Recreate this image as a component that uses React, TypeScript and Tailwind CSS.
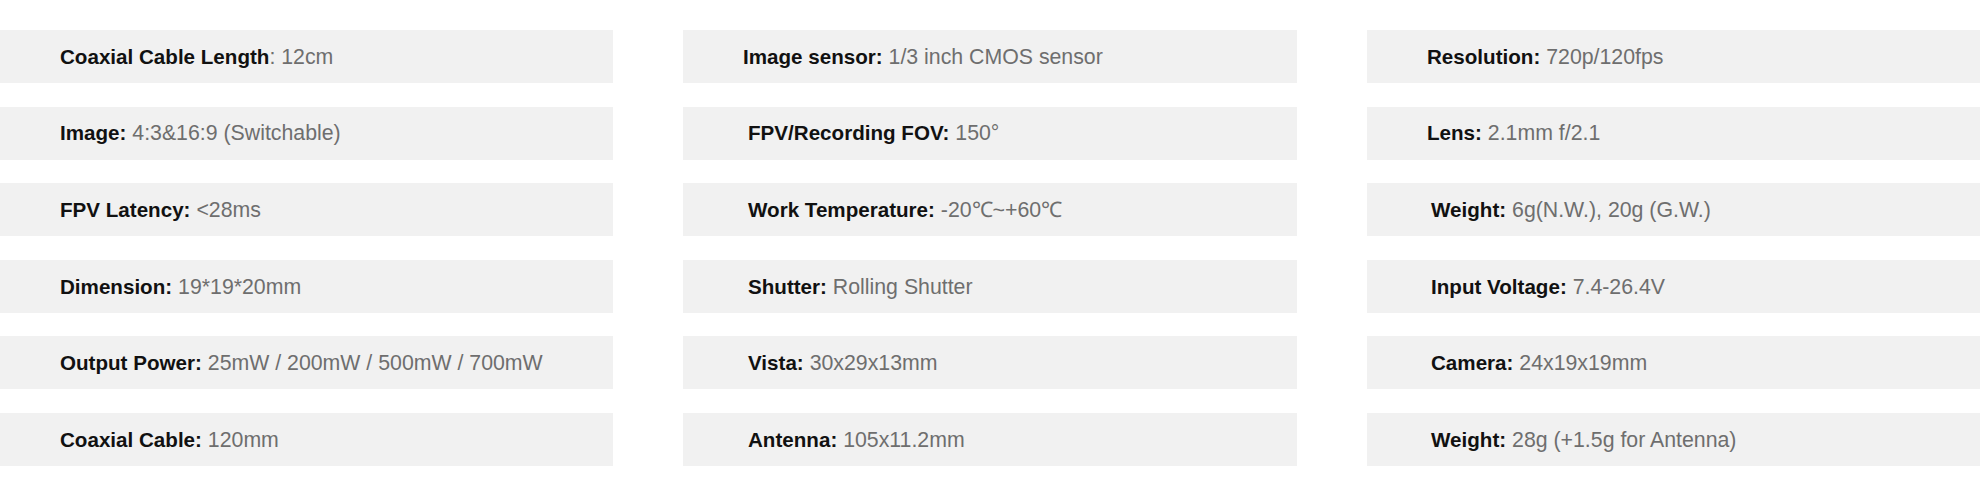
type Spec = { label: string; value: string; indent?: number; colon?: boolean };

const COLUMNS: Spec[][] = [
  [
    { label: "Coaxial Cable Length", value: ": 12cm", colon: false },
    { label: "Image:", value: "4:3&16:9 (Switchable)" },
    { label: "FPV Latency:", value: "<28ms" },
    { label: "Dimension:", value: "19*19*20mm" },
    { label: "Output Power:", value: "25mW / 200mW / 500mW / 700mW" },
    { label: "Coaxial Cable:", value: "120mm" },
  ],
  [
    { label: "Image sensor:", value: "1/3 inch CMOS sensor" },
    { label: "FPV/Recording FOV:", value: "150°", indent: 5 },
    { label: "Work Temperature:", value: "-20℃~+60℃", indent: 5 },
    { label: "Shutter:", value: "Rolling Shutter", indent: 5 },
    { label: "Vista:", value: "30x29x13mm", indent: 5 },
    { label: "Antenna:", value: "105x11.2mm", indent: 5 },
  ],
  [
    { label: "Resolution:", value: "720p/120fps" },
    { label: "Lens:", value: "2.1mm f/2.1" },
    { label: "Weight:", value: "6g(N.W.), 20g (G.W.)", indent: 4 },
    { label: "Input Voltage:", value: "7.4-26.4V", indent: 4 },
    { label: "Camera:", value: "24x19x19mm", indent: 4 },
    { label: "Weight:", value: "28g (+1.5g for Antenna)", indent: 4 },
  ],
];

function Row({ s }: { s: Spec }) {
  return (
    <div className="flex h-[53px] items-center bg-[#f1f1f1] pl-[60px] pt-[2px]">
      <span
        className="whitespace-nowrap leading-none"
        style={s.indent ? { marginLeft: s.indent } : undefined}
      >
        <span className="text-[20.6px] font-bold text-[#111]">{s.label}</span>
        <span className="text-[21.3px] text-[#6e6e6e]">
          {s.colon === false ? "" : " "}
          {s.value}
        </span>
      </span>
    </div>
  );
}

export default function App() {
  return (
    <div className="h-[491px] w-[1980px] bg-white pt-[30px] font-['Liberation_Sans',Arial,sans-serif]">
      <div className="grid grid-cols-[613px_614px_613px] gap-x-[70px]">
        {COLUMNS.map((col, i) => (
          <div key={i} className="flex flex-col gap-[23.6px]">
            {col.map((s, j) => (
              <Row key={j} s={s} />
            ))}
          </div>
        ))}
      </div>
    </div>
  );
}
